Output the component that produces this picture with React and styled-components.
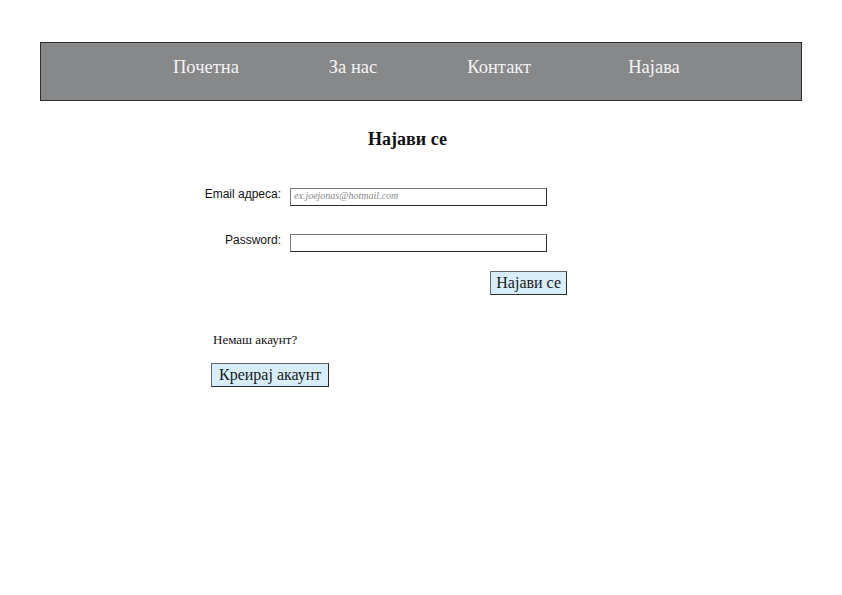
import React from 'react'
import styled, { createGlobalStyle } from 'styled-components'

const GlobalStyle = createGlobalStyle`
    html, body {
        margin: 0;
        padding: 0;
        background: #ffffff;
    }
`

const Page = styled.div`
    padding-top: 42px;
    font-family: "Liberation Serif", "Times New Roman", serif;
`

const Navbar = styled.nav`
    margin: 0 40px;
    height: 59px;
    box-sizing: border-box;
    background: #878889;
    border: 1px solid #2e2e2e;
    display: flex;
    justify-content: flex-start;
    align-items: flex-start;
    gap: 90px;
    padding: 13px 0 0 132px;
`

const NavLink = styled.a`
    color: #f4f4f4;
    font-size: 18.5px;
    text-decoration: none;
    line-height: 22px;
    margin-left: ${p => p.$extra || 0}px;
`

const Content = styled.main`
    margin-left: 200px;
    width: 415px;
`

const Title = styled.h1`
    margin: 28px 0 0;
    text-align: center;
    font-size: 18px;
    line-height: 20px;
    font-weight: bold;
    color: #111;
`

const Row = styled.div`
    display: grid;
    grid-template-columns: 81px 257px;
    column-gap: 9px;
    align-items: start;
    margin-top: ${p => p.$top}px;
`

const Label = styled.label`
    font-family: "Liberation Sans", Arial, sans-serif;
    font-size: 12px;
    line-height: 13px;
    color: #111;
    text-align: right;
    white-space: nowrap;
`

const Input = styled.input`
    box-sizing: border-box;
    width: 257px;
    height: 18px;
    margin: 0;
    border: 1px solid #2a2a2a;
    border-top-color: #777;
    border-left-color: #777;
    background: #fff;
    padding: 0 3px 3px;
    font-family: "Liberation Serif", "Times New Roman", serif;
    font-style: italic;
    font-size: 10px;

    &::placeholder {
        color: #8a8a8a;
    }
`

const ButtonRow = styled.div`
    width: 367px;
    display: flex;
    justify-content: flex-end;
    margin-top: ${p => p.$top}px;
`

const Button = styled.button`
    box-sizing: border-box;
    height: 24px;
    margin: 0;
    padding: 0 ${p => p.$pad || 5}px;
    background: #d7eefa;
    border: 1px solid #2a2a2a;
    border-top-color: #666;
    border-left-color: #666;
    font-family: "Liberation Serif", "Times New Roman", serif;
    font-size: 16px;
    line-height: 20px;
    color: #1a1a1a;
`

const Note = styled.p`
    margin: 37px 0 0 13px;
    font-size: 13px;
    line-height: 15px;
    color: #111;
`

const CreateRow = styled.div`
    margin: 16px 0 0 11px;
`

const links = ['Почетна', 'За нас', 'Контакт', 'Најава']

export default function App() {
    return (
        <Page>
            <GlobalStyle />
            <Navbar>
                {links.map((l, i) => (
                    <NavLink href="#" key={l} $extra={i === 3 ? 7 : 0}>{l}</NavLink>
                ))}
            </Navbar>
            <Content>
                <Title>Најави се</Title>
                <Row $top={39}>
                    <Label>Email адреса:</Label>
                    <Input type="text" placeholder="ex.joejonas@hotmail.com" />
                </Row>
                <Row $top={28}>
                    <Label>Password:</Label>
                    <Input type="password" />
                </Row>
                <ButtonRow $top={19}>
                    <Button>Најави се</Button>
                </ButtonRow>
                <Note>Немаш акаунт?</Note>
                <CreateRow>
                    <Button $pad={7}>Креирај акаунт</Button>
                </CreateRow>
            </Content>
        </Page>
    )
}
